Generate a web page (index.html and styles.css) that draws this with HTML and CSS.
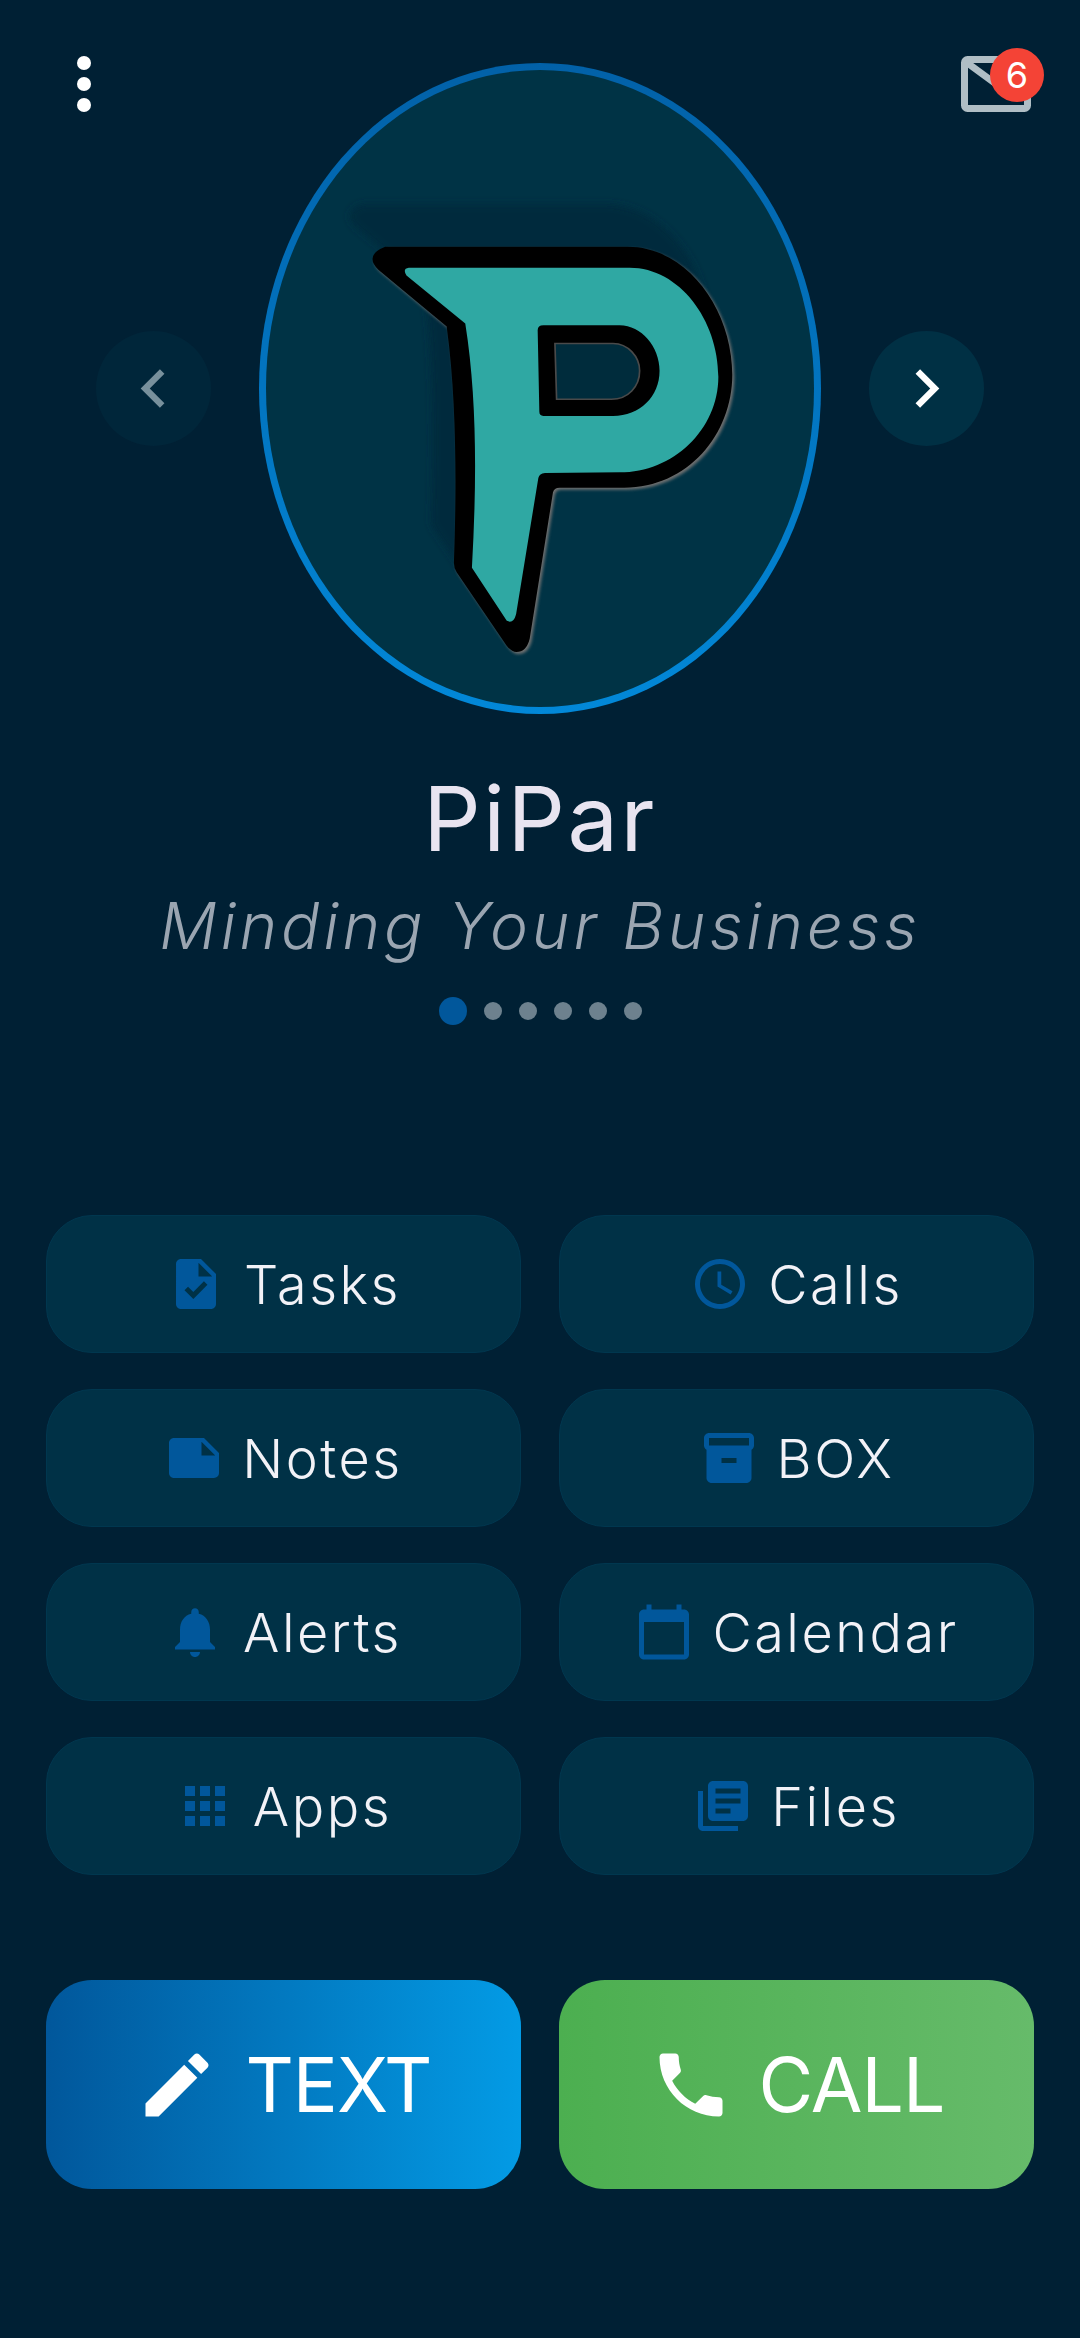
FILE: index.html
```html
<!DOCTYPE html>
<html lang="en">
<head>
  <meta charset="UTF-8" />
  <meta name="viewport" content="width=device-width, initial-scale=1.0"/>
  <title>PiPar</title>
  <link rel="stylesheet" href="styles.css">
</head>
<body>

  <main class="screen">
    <!-- Top corners sit over the hero -->
    <button class="menu-btn" aria-label="Menu"><span></span><span></span><span></span></button>
    <div class="mail">
      <svg class="mail-icon" viewBox="0 0 70 56">
        <rect x="3.5" y="3.5" width="63" height="49" rx="3" fill="none" stroke="#b0bec5" stroke-width="7"/>
        <path d="M5 6 L35 28 L65 6" fill="none" stroke="#b0bec5" stroke-width="7"/>
      </svg>
      <span class="badge">6</span>
    </div>

    <section class="hero">
      <button class="nav-btn nav-prev" aria-label="Previous">
        <svg viewBox="0 0 24 24"><path d="M15.41 7.41 14 6l-6 6 6 6 1.41-1.41L10.83 12z"/></svg>
      </button>
      <div class="oval">
        <svg class="logo" viewBox="-165 -333 1650 1917">
          <defs>
            <filter id="soft"><feGaussianBlur stdDeviation="12"/></filter>
            <filter id="softer"><feGaussianBlur stdDeviation="5"/></filter>
            <path id="outer" d="M200 205 L930 205 C1110 205 1245 395 1245 590 C1245 770 1110 930 920 930 L725 930 Q708 930 705 945 L635 1385 Q625 1425 595 1425 Q580 1425 565 1405 L415 1185 Q405 1170 407 1150 C412 1000 420 700 385 445 L180 275 Q135 230 200 205 Z"/>
          </defs>
          <use href="#outer" transform="translate(-75 -135)" fill="#002c3d" filter="url(#soft)"/>
          <use href="#outer" fill="#707070" filter="url(#softer)"/>
          <use href="#outer" transform="translate(-6 -6)" fill="#000"/>
          <path d="M705 490 L880 490 C925 490 960 530 960 572 C960 620 925 658 875 658 L710 658 Z" fill="#002c3c" stroke="#4a4a4a" stroke-width="5"/>
          <path fill="#2fa8a3" fill-rule="evenodd" d="M265 262 L930 262 C1080 262 1197 420 1197 590 C1197 750 1060 878 900 878 L675 880 Q658 882 655 895 L588 1305 Q580 1335 560 1325 L455 1165 C470 900 470 650 435 430 L258 285 Q245 265 265 262 Z M670 435 L900 435 C965 435 1020 500 1020 572 C1020 650 960 708 880 708 L670 708 Q658 708 658 695 L653 450 Q653 435 670 435 Z"/>
        </svg>
      </div>
      <button class="nav-btn nav-next" aria-label="Next">
        <svg viewBox="0 0 24 24"><path d="M10 6 8.59 7.41 13.17 12l-4.58 4.59L10 18l6-6z"/></svg>
      </button>
    </section>

    <h1 class="title">PiPar</h1>
    <p class="tagline">Minding Your Business</p>

    <div class="dots">
      <span class="dot active"></span>
      <span class="dot"></span>
      <span class="dot"></span>
      <span class="dot"></span>
      <span class="dot"></span>
      <span class="dot"></span>
    </div>

    <nav class="tiles">
      <a class="tile"><svg viewBox="0 0 24 24"><path d="M14 2H6c-1.1 0-1.99.9-1.99 2L4 20c0 1.1.89 2 1.99 2H18c1.1 0 2-.9 2-2V8l-6-6zm-3.06 16L7.4 14.46l1.41-1.41 2.12 2.12 4.24-4.24 1.41 1.41L10.94 18zM13 9V3.5L18.5 9H13z"/></svg><span>Tasks</span></a>
      <a class="tile"><svg viewBox="0 0 24 24"><path d="M11.99 2C6.47 2 2 6.48 2 12s4.47 10 9.99 10C17.52 22 22 17.52 22 12S17.52 2 11.99 2zM12 20c-4.42 0-8-3.58-8-8s3.58-8 8-8 8 3.58 8 8-3.58 8-8 8zm.5-13H11v6l5.25 3.15.75-1.23-4.5-2.67z"/></svg><span>Calls</span></a>
      <a class="tile"><svg viewBox="0 0 24 24"><path d="M22 10l-6-6H4c-1.1 0-2 .9-2 2v12.01c0 1.1.9 1.99 2 1.99l16-.01c1.1 0 2-.89 2-1.99V10zm-7-4.5l5.5 5.5H15V5.5z"/></svg><span>Notes</span></a>
      <a class="tile"><svg viewBox="0 0 24 24"><path d="M20 2H4c-1 0-2 .9-2 2v3.01c0 .72.43 1.34 1 1.69V20c0 1.1 1.1 2 2 2h14c.9 0 2-.9 2-2V8.7c.57-.35 1-.97 1-1.69V4c0-1.1-1-2-2-2zm-5 12H9v-2h6v2zm5-7H4V4l16-.02V7z"/></svg><span>BOX</span></a>
      <a class="tile"><svg viewBox="0 0 24 24"><path d="M12 22c1.1 0 2-.9 2-2h-4c0 1.1.89 2 2 2zm6-6v-5c0-3.07-1.64-5.64-4.5-6.32V4c0-.83-.67-1.5-1.5-1.5s-1.5.67-1.5 1.5v.68C7.63 5.36 6 7.92 6 11v5l-2 2v1h16v-1l-2-2z"/></svg><span>Alerts</span></a>
      <a class="tile"><svg viewBox="0 0 24 24"><path d="M20 3h-1V1h-2v2H7V1H5v2H4c-1.1 0-2 .9-2 2v16c0 1.1.9 2 2 2h16c1.1 0 2-.9 2-2V5c0-1.1-.9-2-2-2zm0 18H4V8h16v13z"/></svg><span>Calendar</span></a>
      <a class="tile"><svg viewBox="0 0 24 24"><path d="M4 8h4V4H4v4zm6 12h4v-4h-4v4zm-6 0h4v-4H4v4zm0-6h4v-4H4v4zm6 0h4v-4h-4v4zm6-10v4h4V4h-4zm-6 4h4V4h-4v4zm6 6h4v-4h-4v4zm0 6h4v-4h-4v4z"/></svg><span>Apps</span></a>
      <a class="tile"><svg viewBox="0 0 24 24"><path d="M4 6H2v14c0 1.1.9 2 2 2h14v-2H4V6zm16-4H8c-1.1 0-2 .9-2 2v12c0 1.1.9 2 2 2h12c1.1 0 2-.9 2-2V4c0-1.1-.9-2-2-2zm-1 9H9V9h10v2zm-4 4H9v-2h6v2zm4-8H9V5h10v2z"/></svg><span>Files</span></a>
    </nav>

    <div class="actions">
      <a class="action action-text"><svg viewBox="0 0 24 24"><path d="M3 17.25V21h3.75L17.81 9.94l-3.75-3.75L3 17.25zM20.71 7.04c.39-.39.39-1.02 0-1.41l-2.34-2.34c-.39-.39-1.02-.39-1.41 0l-1.83 1.83 3.75 3.75 1.83-1.83z"/></svg><span>TEXT</span></a>
      <a class="action action-call"><svg viewBox="0 0 24 24"><path d="M6.62 10.79c1.44 2.83 3.76 5.14 6.59 6.59l2.2-2.2c.27-.27.67-.36 1.02-.24 1.12.37 2.33.57 3.57.57.55 0 1 .45 1 1V20c0 .55-.45 1-1 1-9.39 0-17-7.61-17-17 0-.55.45-1 1-1h3.5c.55 0 1 .45 1 1 0 1.25.2 2.45.57 3.57.11.35.03.74-.25 1.02l-2.2 2.2z"/></svg><span>CALL</span></a>
    </div>
  </main>

</body>
</html>
```

FILE: styles.css
```css
* {
  box-sizing: border-box;
}

body {
  margin: 0;
  background: #002034;
  font-family: Inter, "Open Sans", sans-serif;
  color: #fff;
}

.screen {
  position: relative;
  width: 1080px;
  height: 2338px;
  overflow: hidden;
  padding-top: 63px;
}

button {
  border: none;
  padding: 0;
  background: none;
}

.menu-btn {
  position: absolute;
  top: 56px;
  left: 77px;
  display: flex;
  flex-direction: column;
  gap: 7px;
}

.menu-btn span {
  width: 14px;
  height: 14px;
  border-radius: 50%;
  background: #fff;
}

.mail {
  position: absolute;
  top: 48px;
  left: 961px;
  width: 83px;
  height: 64px;
}

.mail-icon {
  position: absolute;
  left: 0;
  bottom: 0;
  width: 70px;
  height: 56px;
}

.badge {
  position: absolute;
  top: 0;
  right: 0;
  width: 54px;
  height: 54px;
  border-radius: 50%;
  background: #f44336;
  font-size: 36px;
  line-height: 54px;
  text-align: center;
}

/* hero */
.hero {
  display: flex;
  align-items: center;
  justify-content: center;
  gap: 48px;
}

.nav-btn {
  display: flex;
  align-items: center;
  justify-content: center;
  width: 115px;
  height: 115px;
  border-radius: 50%;
}

.nav-btn svg {
  width: 77px;
  height: 77px;
}

.nav-prev {
  background: #00263a;
  fill: #78909c;
}

.nav-next {
  background: #003044;
  fill: #fff;
}

.oval {
  width: 562px;
  height: 651px;
  border: 7px solid transparent;
  border-radius: 50%;
  background: linear-gradient(#003345, #003345) padding-box,
    linear-gradient(#0261a8, #0288d8) border-box;
}

.logo {
  display: block;
  width: 100%;
  height: 100%;
}

.title {
  margin: 53px 0 0;
  font-size: 90px;
  font-weight: 400;
  line-height: 104px;
  letter-spacing: 2.5px;
  text-align: center;
  color: #e8e4f0;
}

.tagline {
  margin: 17px 0 0;
  font-size: 64px;
  font-weight: 300;
  font-style: italic;
  line-height: 76px;
  letter-spacing: 3.9px;
  text-align: center;
  color: #9aa5b1;
}

.dots {
  display: flex;
  align-items: center;
  justify-content: center;
  gap: 17px;
  margin-top: 33px;
}

.dot {
  width: 18px;
  height: 18px;
  border-radius: 50%;
  background: #6d818e;
}

.dot.active {
  width: 28px;
  height: 28px;
  background: #01579b;
}

/* menu tiles */
.tiles {
  display: grid;
  grid-template-columns: 475px 475px;
  grid-auto-rows: 138px;
  gap: 36px 38px;
  margin-top: 190px;
  padding: 0 46px;
}

.tile {
  display: flex;
  align-items: center;
  justify-content: center;
  gap: 18px;
  border: 1px solid #00374f;
  border-radius: 46px;
  background: #003146;
  font-size: 54px;
  font-weight: 300;
  letter-spacing: 2.5px;
  color: #f2f2f7;
}

.tile svg {
  width: 60px;
  height: 60px;
  fill: #01579b;
}

.actions {
  display: grid;
  grid-template-columns: 475px 475px;
  gap: 38px;
  margin-top: 105px;
  padding: 0 46px;
}

.action {
  display: flex;
  align-items: center;
  justify-content: center;
  gap: 26px;
  height: 209px;
  border-radius: 46px;
  font-size: 75px;
  font-weight: 400;
  letter-spacing: -1px;
}

.action svg {
  width: 84px;
  height: 84px;
  fill: #fff;
}

.action-text {
  background: linear-gradient(90deg, #01579b, #039be5);
}

.action-call {
  background: linear-gradient(90deg, #4caf50, #66bb6a);
}
```
